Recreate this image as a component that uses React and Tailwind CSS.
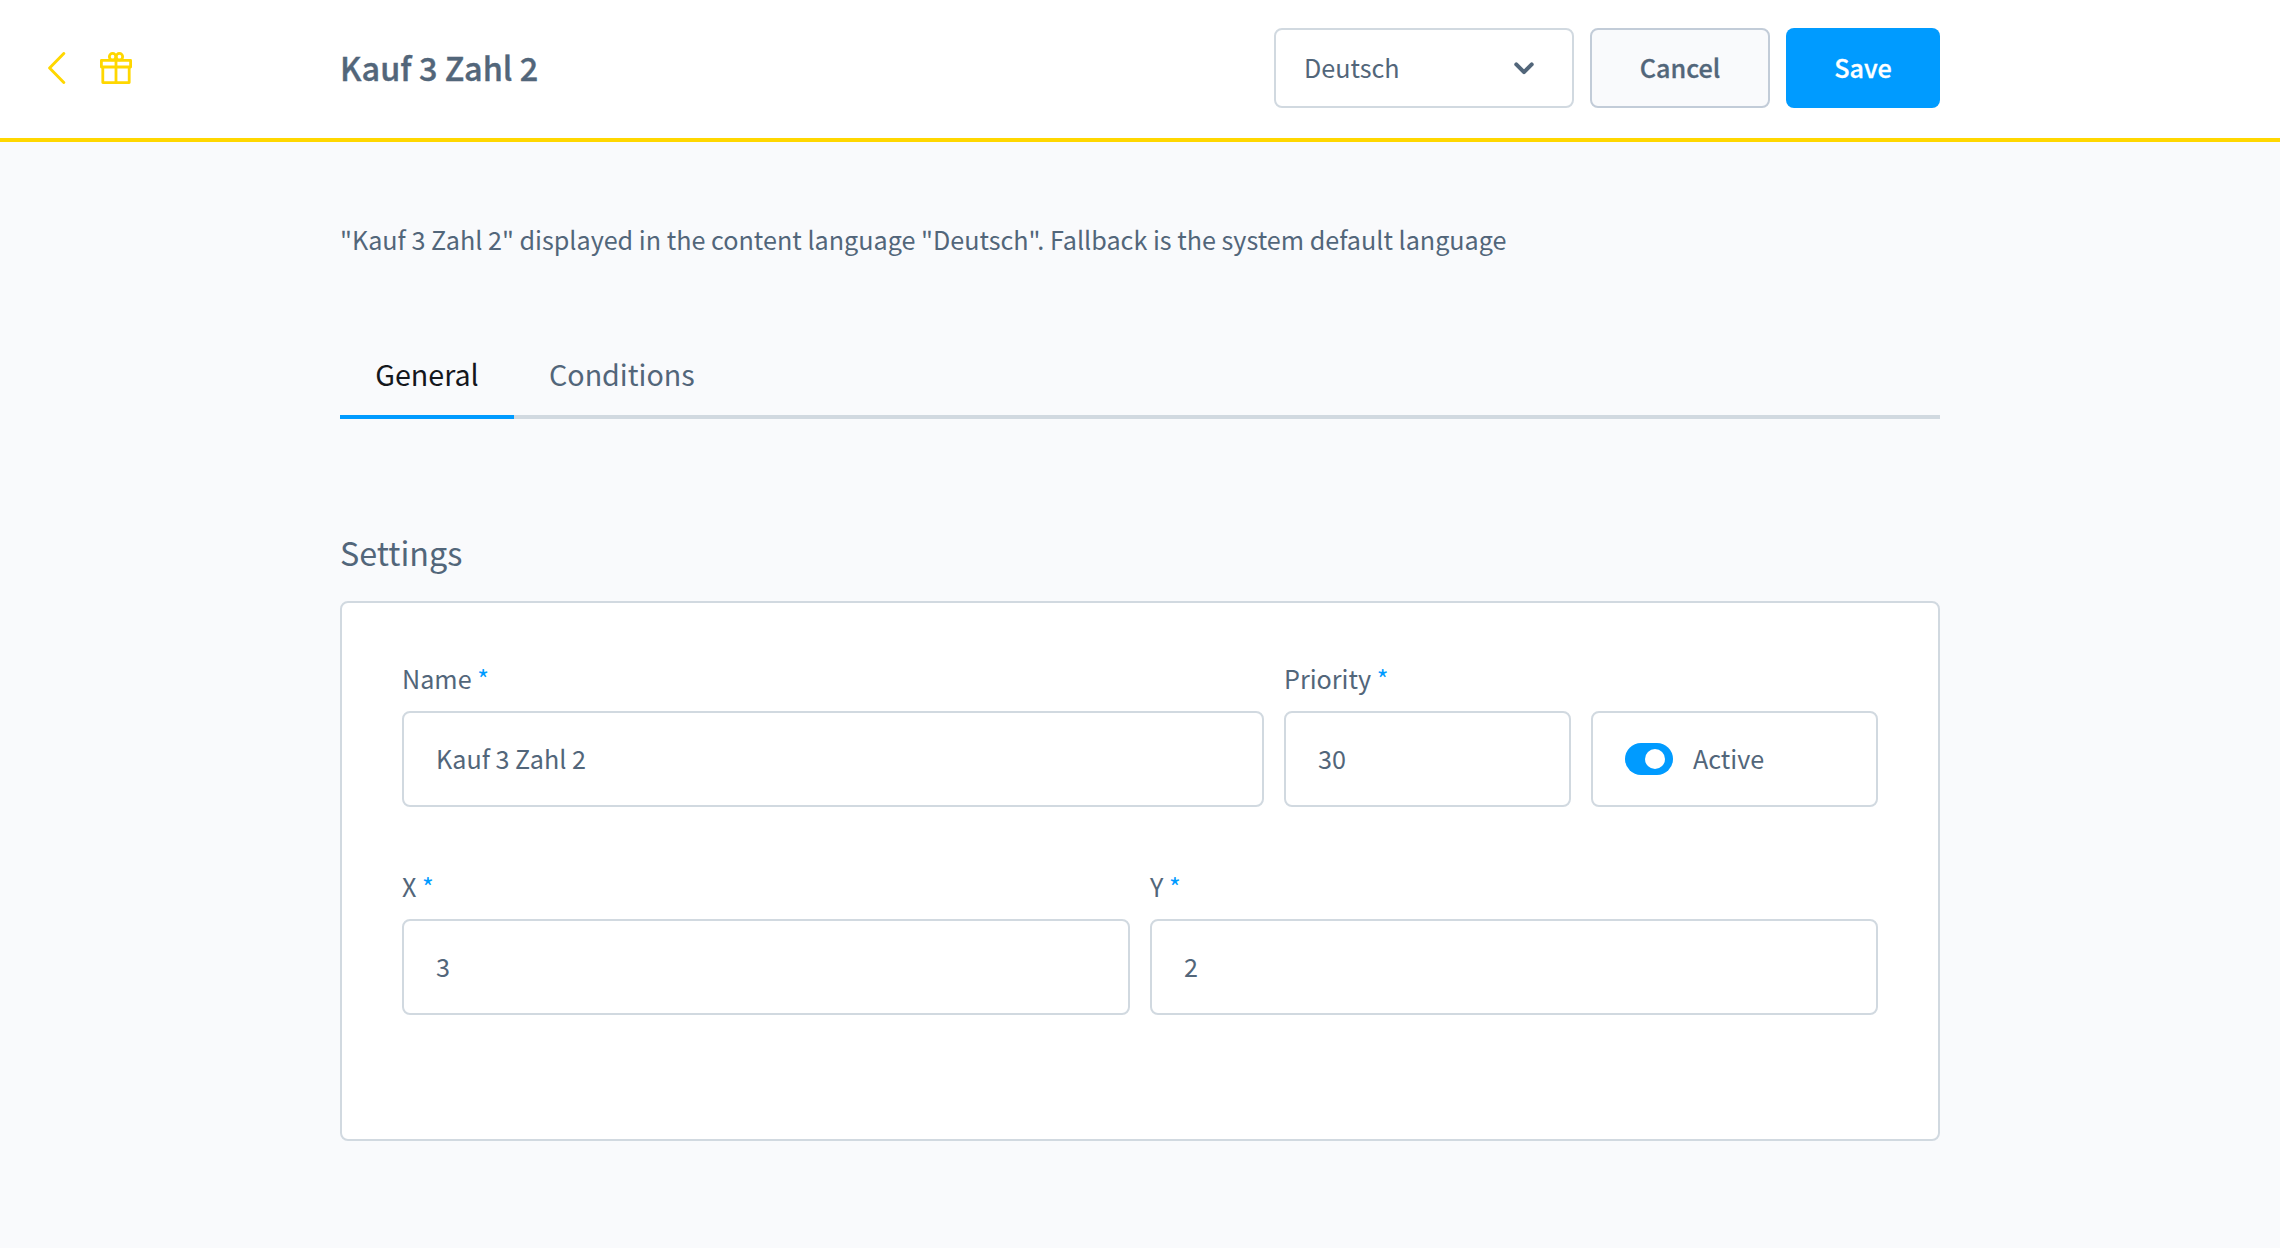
function BackIcon() {
  return (
    <svg width="18" height="32" viewBox="0 0 18 32" fill="none" stroke="currentColor" strokeWidth="2.9" strokeLinecap="round" strokeLinejoin="round">
      <path d="M15.8 1.5 1.6 16l14.2 14.5" />
    </svg>
  );
}

function GiftIcon() {
  return (
    <svg width="32" height="32" viewBox="0 0 32 32" fill="none" stroke="currentColor" strokeWidth="2.8" strokeLinejoin="round">
      <rect x="1.4" y="8.4" width="29.2" height="6.6" />
      <path d="M2.8 15v15.6h26.4V15M16 8v22.5" />
      <path d="M16 8V4.7" />
      <circle cx="12.6" cy="4.7" r="3.25" />
      <circle cx="19.4" cy="4.7" r="3.25" />
    </svg>
  );
}

function ChevronDown() {
  return (
    <svg width="20" height="13" viewBox="0 0 20 13" fill="none" stroke="currentColor" strokeWidth="4" strokeLinecap="round" strokeLinejoin="round">
      <path d="m2.3 2.4 7.7 7.7 7.7-7.7" />
    </svg>
  );
}

function Field({ label, value, className }) {
  return (
    <div className={className}>
      <label className="block leading-[32px]">
        {label} <span className="text-[#009bff]">*</span>
      </label>
      <div className="mt-[17px] flex h-[96px] items-center rounded-[8px] border-2 border-[#d1d9e0] bg-white px-[32px] pb-[2px] leading-[36px]">
        {value}
      </div>
    </div>
  );
}

export default function App() {
  return (
    <div className="h-[1248px] w-[2280px] overflow-hidden bg-[#f9fafc] font-['Noto_Sans_CJK_SC',sans-serif] text-[25.17px] text-[#52667a]">
      <header className="flex h-[142px] items-start border-b-4 border-[#ffd700] bg-white">
        <div className="mt-[52px] flex w-[340px] shrink-0 gap-[34px] pl-[48px] text-[#ffd700]">
          <BackIcon />
          <GiftIcon />
        </div>
        <h1 className="mt-[47px] text-[32.4px] leading-[40px] font-medium tracking-[0.05px] [-webkit-text-stroke:0.4px_currentColor]">
          Kauf 3 Zahl 2
        </h1>
        <div className="mt-[28px] mr-[340px] ml-auto flex gap-4 leading-[36px]">
          <div className="flex h-[80px] w-[300px] items-center justify-between rounded-[8px] border-2 border-[#d1d9e0] pr-[38px] pl-[28px]">
            <span className="mb-[2px]">Deutsch</span>
            <ChevronDown />
          </div>
          <button className="h-[80px] w-[180px] rounded-[8px] border-2 border-[#c2ccd8] bg-[#f9fafc] pb-[2px] font-medium [-webkit-text-stroke:0.3px_currentColor]">
            Cancel
          </button>
          <button className="h-[80px] w-[154px] rounded-[8px] bg-[#009bff] pb-[2px] font-medium text-white [-webkit-text-stroke:0.3px_currentColor]">
            Save
          </button>
        </div>
      </header>

      <main className="mx-auto w-[1600px]">
        <p className="pt-[79px] leading-[36px]">
          "Kauf 3 Zahl 2" displayed in the content language "Deutsch". Fallback is the system default language
        </p>

        <nav className="mt-[96px] flex text-[28.65px] leading-[41px]">
          <div className="w-[174px] border-b-4 border-[#009bff] pb-[21px] text-center text-[#14171c]">General</div>
          <div className="flex-1 border-b-4 border-[#d1d9e0] pb-[21px] pl-[35px]">Conditions</div>
        </nav>

        <h2 className="mt-[113px] text-[32.3px] leading-[40px]">Settings</h2>
        <section className="mt-[29px] h-[540px] rounded-[8px] border-2 border-[#d1d9e0] bg-white px-[60px] pt-[59px]">
          <div className="flex items-end gap-5">
            <Field label="Name" value="Kauf 3 Zahl 2" className="w-[862px]" />
            <Field label="Priority" value="30" className="w-[287px]" />
            <div className="flex h-[96px] w-[287px] items-center gap-5 rounded-[8px] border-2 border-[#d1d9e0] pl-[32px]">
              <div className="flex h-8 w-12 items-center justify-end rounded-full bg-[#009bff] pr-2">
                <div className="size-5 rounded-full bg-white" />
              </div>
              <span className="mb-[2px] leading-[36px]">Active</span>
            </div>
          </div>
          <div className="mt-[63px] grid grid-cols-2 gap-5">
            <Field label="X" value="3" />
            <Field label="Y" value="2" />
          </div>
        </section>
      </main>
    </div>
  );
}
